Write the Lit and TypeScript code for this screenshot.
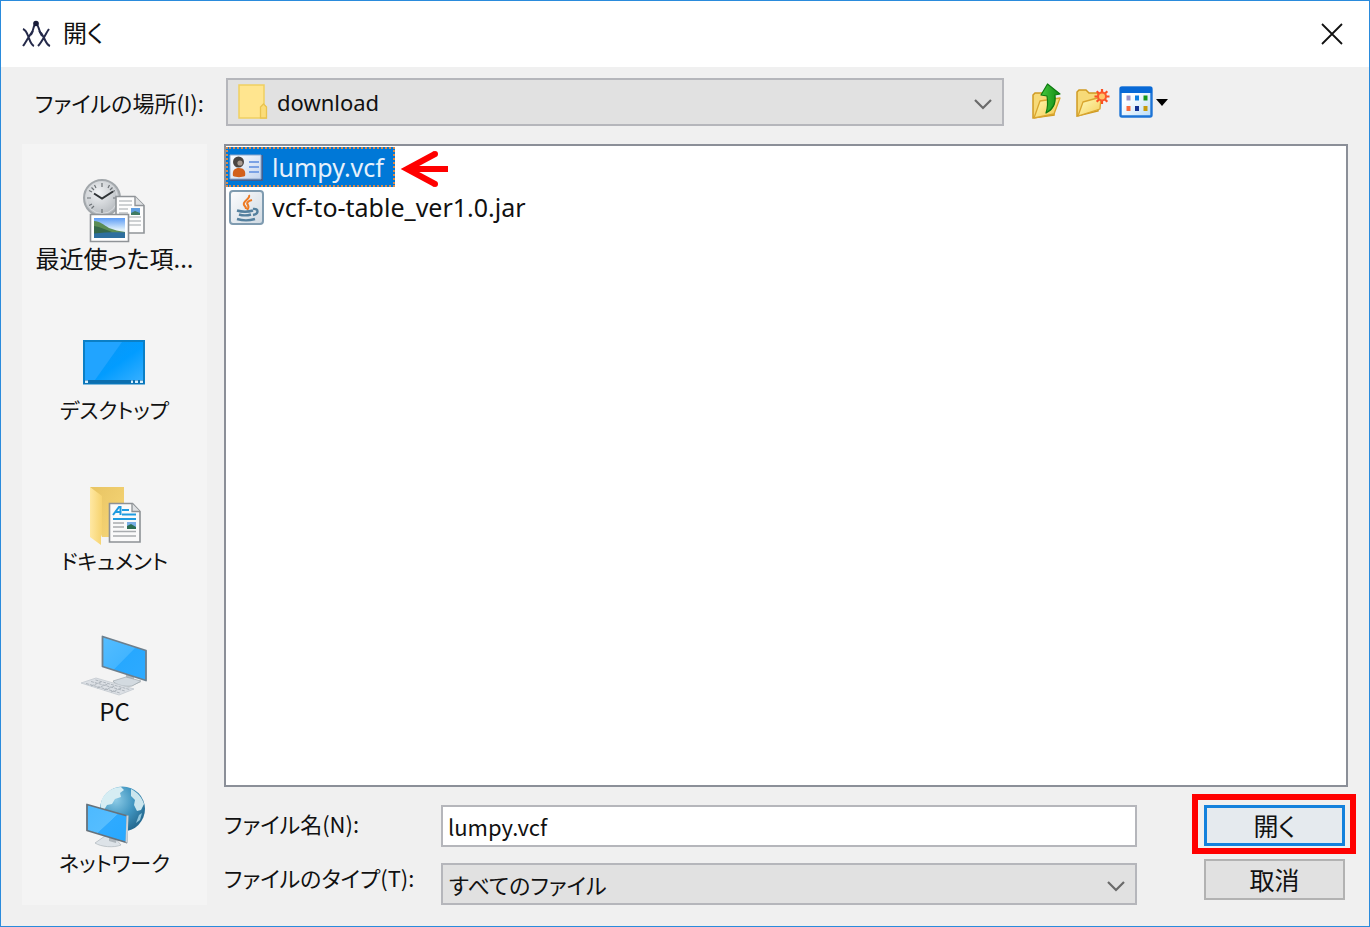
import { LitElement, html, svg, css, type TemplateResult } from "lit";
import { customElement, property, state } from "lit/decorators.js";
import { classMap } from "lit/directives/class-map.js";

const recentIcon = svg`
  <defs>
    <radialGradient id="dial" cx=".4" cy=".35" r=".8"><stop offset="0" stop-color="#f1f3f5"/><stop offset="1" stop-color="#a9aeb3"/></radialGradient>
    <linearGradient id="sky" x2="0" y2="1"><stop offset="0" stop-color="#5b9bf5"/><stop offset=".6" stop-color="#e3f3fb"/><stop offset=".75" stop-color="#cfe6f4"/></linearGradient>
  </defs>
  <circle cx="20" cy="20" r="18" fill="url(#dial)" stroke="#a2a7ab" stroke-width="2"/>
  <circle cx="20" cy="20" r="15.5" fill="none" stroke="#d9dcdf"/>
  <path d="M20 5v4M20 31v4M5 20h4M31 20h4M9.500 9.500l2.500 2.500M30.500 9.500 28 12M9.500 30.500 12 28M12.500 7l1.500 3M27.500 7 26 10M7 12.500l3 1.500M7 27.500l3-1.500M33 12.500 30 14" stroke="#6d7276" stroke-width="1.200"/>
  <path d="M12 15.500l8 5L31 13.500" fill="none" stroke="#2f3336" stroke-width="2"/>
  <path d="M34 18.500h19l9 9V55H34z" fill="#fdfdfd" stroke="#909498" stroke-width="1.600"/>
  <path d="M53 18.500v9h9" fill="#dfe1e3" stroke="#909498" stroke-width="1.400"/>
  <path d="M37 23h13M37 27h13M37 31h9M37 35h9M37 39h22M37 43h22M37 47h22" stroke="#bfc2c5" stroke-width="1.500"/>
  <path d="M49 30h9v7h-9z" fill="#5e9de0"/><path d="M49 35l4-2 5 2v2h-9z" fill="#3f7a62"/>
  <path d="M8.500 36.500h38v27h-38z" fill="#fff" stroke="#8f9397" stroke-width="1.600"/>
  <path d="M12 40h31v20H12z" fill="url(#sky)"/>
  <path d="M12 43c6 0 10 4 15 7 5 2 10 3 16 4v2H12z" fill="#5c8d55"/>
  <path d="M12 48c7 1 12 4 18 6l-6 3H12z" fill="#35684a"/>
  <path d="M12 55.500c10-1 20-1.500 31-1V60H12z" fill="#2e6f9f"/>`;

const desktopIcon = svg`
  <defs><linearGradient id="desk" x2="1" y2="1"><stop offset="0" stop-color="#0c95f3"/><stop offset=".55" stop-color="#029cff"/><stop offset="1" stop-color="#3cb1ff"/></linearGradient></defs>
  <path d="M2 12h60v42.500H2z" fill="url(#desk)" stroke="#0b7fc6" stroke-width="2"/>
  <path d="M3 13h37L13 51H3z" fill="#21a4ff"/>
  <path d="M2 51h60v3.500H2z" fill="#0b6eae"/>
  <path d="M3 51.500h3v2.500H3zM49 51.500h2v2.500h-2zM53 51.500h3v2.500h-3zM58 51.500h3v2.500h-3z" fill="#d7efff"/>`;

const documentsIcon = svg`
  <defs><linearGradient id="fold"><stop offset="0" stop-color="#ffe8a3"/><stop offset="1" stop-color="#f6d36f"/></linearGradient>
  <linearGradient id="back" x2="1" y2="1"><stop offset="0" stop-color="#e8c463"/><stop offset="1" stop-color="#f7d778"/></linearGradient></defs>
  <path d="M8 7h34v50H20z" fill="url(#back)"/>
  <path d="M8 7l12 9v38l-1 3v8L8 57z" fill="url(#fold)"/>
  <path d="M27.500 23.500h23l7.500 8V62H27.500z" fill="#fafafa" stroke="#8d9195" stroke-width="1.600"/>
  <path d="M50 23.500v8h8" fill="#dfe1e3" stroke="#8d9195" stroke-width="1.300"/>
  <path d="M31 35l6-8h1.500V35M33 32h6" stroke="#1e9be0" stroke-width="2" fill="none"/>
  <path d="M40 30h7M40 34.500h14M31 39h23" stroke="#1e9be0" stroke-width="2"/>
  <path d="M31 43h11M31 47h11M31 51.500h23M31 56h23" stroke="#a9acaf" stroke-width="1.500"/>
  <path d="M45 42h9v7h-9z" fill="#79aee6"/><path d="M45 46l4-2 5 3v2h-9z" fill="#2b6d53"/>`;

const pcIcon = svg`
  <defs><linearGradient id="lcd" x2="1" y2="1"><stop offset="0" stop-color="#55bdff"/><stop offset=".5" stop-color="#43b5ff"/><stop offset=".51" stop-color="#27a8ff"/><stop offset="1" stop-color="#2eaaff"/></linearGradient></defs>
  <path d="M43 40l8 3v6l7 2-9 4c-8 1-16-1-19-4l13-4z" fill="#b3babf"/>
  <path d="M30 50l13-4 15 4-9 5c-8 1-16-1-19-5z" fill="#d3dae0" stroke="#9fa7ae" stroke-width=".700"/>
  <path d="M19.500 5.500 63 19.500v30L19.500 35.500z" fill="url(#lcd)" stroke="#6d7f8d" stroke-width="1.800" stroke-linejoin="round"/>
  <path d="M-2 52l15-5 38 11-15 6z" fill="#dce0e5" stroke="#c3c9cf" stroke-width=".800"/>
  <path d="M3 52.500l34 9.500M8 50.500l34 9.500M12.500 49l34 9.500M8 55l10-4M14 57l11-4M21 59l11-4M28 61l11-4" stroke="#aeb5bc" stroke-width="1" stroke-dasharray="3 1"/>`;

const networkIcon = svg`
  <defs><radialGradient id="globe" cx=".35" cy=".3" r=".8"><stop offset="0" stop-color="#8ccbe6"/><stop offset=".5" stop-color="#4196c1"/><stop offset="1" stop-color="#1f6187"/></radialGradient>
  <linearGradient id="lcd2" x2="1" y2="1"><stop offset="0" stop-color="#4cb9ff"/><stop offset=".5" stop-color="#55bdff"/><stop offset=".51" stop-color="#2eaaff"/><stop offset="1" stop-color="#27a8ff"/></linearGradient></defs>
  <circle cx="39.500" cy="27" r="22.500" fill="url(#globe)"/>
  <path d="M19 17c4-8 12-12 19-12l3 3-4 3 1 4-6 2-3 5-5 1-3 5-3-1c-1-3 0-7 1-10z" fill="#d6edf3"/>
  <path d="M48 7c6 3 11 8 13 15l-3 6-4 1-3-6 1-5-4-4z" fill="#cbe6ee"/>
  <path d="M56 33l3-2-2 7-4 3z" fill="#92c6dc"/>
  <path d="M22 54l10 2 6 7c-7 3-20 2-26-2z" fill="#dde3e8" stroke="#b5bcc2" stroke-width=".800"/>
  <path d="M26 53l8 2-1 6-7-2z" fill="#aeb6bc"/>
  <path d="M4 22.500 44.500 34l-1 26.500L4 48.500z" fill="url(#lcd2)" stroke="#66727c" stroke-width="1.800" stroke-linejoin="round"/>
  <path d="M44.500 33.500l-1 27" stroke="#cbd3d9" stroke-width="2"/>`;

const appIcon = svg`
  <g fill="none" stroke="#252a4a" stroke-width="2">
    <path d="M1 9c3 1 4 4 5.500 8S9 25 12 26M11 11C8 14 4 22 1 26"/>
    <path d="M17 11c3 2 4 5 5.500 8S25 25 28 26M27 9c-3 4-7 13-11 17"/>
    <path d="M14 3c-3 2-2 7-5 12M14 3c3 2 2 7 6 13"/>
  </g><circle cx="14" cy="3.500" r="2.800" fill="#171b38"/>`;

const folderIcon = svg`
  <path d="M1 1h25v20l2 2v11H1z" fill="#ffe58f" stroke="#f0cf62" stroke-width="1.500"/>
  <path d="M22.500 34V23l3-3 3 3v11z" fill="#fbdc78" stroke="#e9c350" stroke-width="1.300"/>`;

const upIcon = svg`
  <defs><linearGradient id="yel" x2="1" y2="1"><stop offset="0" stop-color="#fffbb5"/><stop offset="1" stop-color="#f3c64c"/></linearGradient>
  <linearGradient id="grn"><stop offset="0" stop-color="#45c83e"/><stop offset="1" stop-color="#128a12"/></linearGradient></defs>
  <path d="M2 34V11l2-2h8l2 2h9v20z" fill="#f7da78" stroke="#cf9a22" stroke-width="1.500"/>
  <path d="M3 34l6-17 20-3-6 16z" fill="url(#yel)" stroke="#d9a52f" stroke-width="1.300" stroke-linejoin="round"/>
  <path d="M16.500 0 29 10l-5 1c1 8-1 14-9 18 2-6 2-11 1-17l-6-1z" fill="url(#grn)" stroke="#0d7a10" stroke-width="1.200" stroke-linejoin="round"/>`;

const newFolderIcon = svg`
  <defs><linearGradient id="yel2" x2="1" y2="1"><stop offset="0" stop-color="#fffcc0"/><stop offset="1" stop-color="#f5cf5c"/></linearGradient></defs>
  <path d="M2 32V8l2-2h7l3 3h9v18z" fill="#f7da78" stroke="#cf9a22" stroke-width="1.500"/>
  <path d="M3 32l5-14 18-5-1 12z" fill="url(#yel2)" stroke="#d9a52f" stroke-width="1.300" stroke-linejoin="round"/>
  <path d="M27 5v15M19.500 12.500h15M21.700 7.200l10.600 10.600M32.300 7.200 21.700 17.800" stroke="#fb4f23" stroke-width="2.200"/>
  <circle cx="27" cy="12.500" r="4" fill="#ffc56a" stroke="#fb5a2c" stroke-width="2"/>`;

const viewIcon = svg`
  <defs><linearGradient id="pane" x2="1" y2="1"><stop offset="0.300" stop-color="#fff"/><stop offset="1" stop-color="#b9dcf8"/></linearGradient></defs>
  <rect x="1.500" y="3.500" width="31" height="29" rx="1.500" fill="url(#pane)" stroke="#1d74d6" stroke-width="2.400"/>
  <path d="M1 3h32v6H1z" fill="#0869d6"/>
  <path d="M7.500 11.500h4v5h-4z" fill="#9d93c9"/><path d="M16 11.500h4v5h-4z" fill="#0e7fe0"/><path d="M24.500 11.500h4v5h-4z" fill="#14961b"/>
  <path d="M7.500 22h4v5h-4z" fill="#fa6a3c"/><path d="M16 22h4v5h-4z" fill="#123191"/><path d="M24.500 22h4v5h-4z" fill="#c79a0c"/>`;

const cardIcon = svg`
  <defs><linearGradient id="card" x2="1" y2="1"><stop offset="0" stop-color="#fff"/><stop offset="1" stop-color="#c4d5ee"/></linearGradient></defs>
  <path d="M1 5h33v26H1z" fill="#3e5f92"/>
  <path d="M1 5h31v24H1z" fill="url(#card)" stroke="#8ea7cb"/>
  <path d="M20 12h10M20 17h10M20 22h10" stroke="#7ba2e4" stroke-width="1.800"/>
  <path d="M4 26c-1-6 2-8 6-8 5 0 7 3 6 8-3 1.500-9 1.500-12 0z" fill="#d2601b"/>
  <circle cx="9.500" cy="12" r="5.500" fill="#4b4542"/><circle cx="11" cy="13" r="2.600" fill="#a89a90"/>`;

const jarIcon = svg`
  <defs><linearGradient id="jar" x2="1" y2="1"><stop offset="0" stop-color="#fdfdfe"/><stop offset="1" stop-color="#cfd9e2"/></linearGradient></defs>
  <rect x="1" y="1" width="33" height="33" rx="3" fill="url(#jar)" stroke="#7f9bb0" stroke-width="2"/>
  <path d="M20 5c2 4-7 6-5 10 1 1 2 2 2 4M23 10c-4 1-6 3-4 5 1 2 1 3-1 5" fill="none" stroke="#ee7a22" stroke-width="2"/>
  <path d="M8 20.500c5 1.500 11 1.500 16 0M10 24.500c4 1.200 8 1.200 12 0M24 19c6-1 6 5 0 6M8 29c5 1.500 13 1.500 18 0" fill="none" stroke="#54809e" stroke-width="2.400"/>`;

const chevron = html`<svg class="chevron" width="20" height="12" viewBox="0 0 20 12" aria-hidden="true"><path d="M2 2l8 8 8-8" fill="none" stroke="#6a6a6a" stroke-width="2.200"/></svg>`;

interface Place { label: string; icon: TemplateResult; kana: boolean }
interface Entry { name: string; icon: TemplateResult }

const places: Place[] = [
  { label: "最近使った項...", icon: recentIcon, kana: false },
  { label: "デスクトップ", icon: desktopIcon, kana: true },
  { label: "ドキュメント", icon: documentsIcon, kana: true },
  { label: "PC", icon: pcIcon, kana: false },
  { label: "ネットワーク", icon: networkIcon, kana: true },
];

const entries: Entry[] = [
  { name: "lumpy.vcf", icon: cardIcon },
  { name: "vcf-to-table_ver1.0.jar", icon: jarIcon },
];

const controls = css`
  *, *::before, *::after { box-sizing: border-box; }
  button, input, select {
    font: inherit;
    font-feature-settings: inherit;
    color: inherit;
    margin: 0;
    padding: 0;
    border: 0;
    border-radius: 0;
    background: none;
    appearance: none;
    outline: 0;
  }
  svg { display: block; overflow: visible; flex: none; }
`;

@customElement("places-bar")
class PlacesBar extends LitElement {
  static styles = [controls, css`
    :host { display: block; background: #f4f4f4; }
    .places { display: flex; flex-direction: column; align-items: center; gap: 58px; padding: 34px 0 27px; }
    .place { display: flex; flex-direction: column; align-items: center; gap: 3px; font-size: 24px; line-height: 26px; white-space: nowrap; }
    .kana { font-size: 21px; }
  `];
  render() {
    return html`<nav class="places">
      ${places.map((p) => html`<button class=${classMap({ place: true, kana: p.kana })} type="button">
        <svg width="64" height="64" viewBox="0 0 64 64" aria-hidden="true">${p.icon}</svg>
        <span>${p.label}</span>
      </button>`)}
    </nav>`;
  }
}

@customElement("file-list")
class FileList extends LitElement {
  @property() selected = "";
  static styles = [controls, css`
    :host { display: block; background: #fff; border: 2px solid #8b8f98; font-family: "Noto Sans", "Noto Sans CJK JP", sans-serif; }
    .list { list-style: none; margin: 0; padding: 1px 0; }
    .row { display: flex; align-items: center; gap: 7px; }
    .entry { display: flex; align-items: center; gap: 8px; height: 40px; padding: 0 9px 0 1px; border: 2px dotted transparent; font-size: 25px; line-height: 32px; }
    .current { background: #0078d7; color: #e6f1fb; border-color: #d98a4a; }
  `];
  private pick(name: string) {
    this.dispatchEvent(new CustomEvent("pick", { detail: name }));
  }
  render() {
    return html`<ul class="list">
      ${entries.map((e) => {
        const on = e.name === this.selected;
        return html`<li class="row">
          <button type="button" class=${classMap({ entry: true, current: on })} @click=${() => this.pick(e.name)}>
            <svg width="35" height="35" viewBox="0 0 35 35" aria-hidden="true">${e.icon}</svg>
            <span>${e.name}</span>
          </button>
          ${on ? html`<svg width="46" height="36" viewBox="0 0 46 36" aria-hidden="true">
            <path d="M4 20h42M33 5 5 20l28 15" fill="none" stroke="#f00" stroke-width="6"/><circle cx="33" cy="5" r="3" fill="#f00"/><circle cx="33" cy="35" r="3" fill="#f00"/>
          </svg>` : ""}
        </li>`;
      })}
    </ul>`;
  }
}

@customElement("app-root")
class AppRoot extends LitElement {
  @state() private file = "lumpy.vcf";

  static styles = [controls, css`
    :host { display: block; font-family: "Noto Sans CJK JP", sans-serif; font-size: 22px; line-height: 32px; color: #111; font-feature-settings: "palt"; }
    .dialog { display: flex; flex-direction: column; min-height: 100vh; background: #f0f0f0; border: 1px solid #2a8bdc; }
    .titlebar { display: flex; align-items: center; gap: 13px; height: 66px; padding: 0 26px 0 21px; background: #fff; }
    .title { flex: 1; margin: 0; padding-bottom: 4px; font-size: 24px; font-weight: 400; line-height: 32px; }
    .location { display: grid; grid-template-columns: 177px minmax(0, 1fr) auto; column-gap: 14px; align-items: center; padding: 11px 201px 18px 34px; }
    .location label { white-space: nowrap; }
    .tools { display: flex; align-items: center; gap: 8px; padding-left: 13px; }
    .tool { display: flex; align-items: center; gap: 3px; }
    .combo { position: relative; }
    .combo select { display: block; width: 100%; height: 42px; padding: 0 44px 0 6px; background: #e1e1e1; border: 2px solid #b5b6bb; }
    .combo .place-select { height: 48px; padding-left: 49px; font-family: "Noto Sans", sans-serif; }
    .chevron { position: absolute; right: 11px; top: 50%; margin-top: -4px; pointer-events: none; }
    .folder { position: absolute; left: 12px; top: 6px; pointer-events: none; }
    .main { flex: 1; display: grid; grid-template-columns: 185px minmax(0, 1fr); column-gap: 17px; padding: 0 21px 21px; }
    .content { display: flex; flex-direction: column; gap: 18px; }
    .files { flex: 1; }
    .form { display: grid; grid-template-columns: 203px minmax(0, 1fr) 141px; column-gap: 14px; padding-right: 3px; align-items: start; }
    .labels { display: flex; flex-direction: column; gap: 18px; line-height: 36px; white-space: nowrap; }
    .fields { display: flex; flex-direction: column; gap: 16px; padding-right: 53px; }
    .name { width: 100%; height: 42px; padding: 0 5px; background: #fff; border: 2px solid #b5b6bb; }
    .actions { display: flex; flex-direction: column; gap: 13px; }
    .action { position: relative; height: 41px; padding-bottom: 2px; background: #e1e1e1; border: 2px solid #b2b2b2; font-size: 25px; line-height: 32px; }
    .primary { background: #e5eaee; border: 3px solid #1481dc; }
    .primary::after { content: ""; position: absolute; inset: -14px -14px -11px -15px; border: 6px solid #f00; pointer-events: none; }
  `];

  render() {
    return html`<section class="dialog" role="dialog" aria-labelledby="title">
      <header class="titlebar">
        <svg width="28" height="28" viewBox="0 0 28 28" aria-hidden="true">${appIcon}</svg>
        <h1 class="title" id="title">開く</h1>
        <button type="button" aria-label="閉じる">
          <svg width="22" height="22" viewBox="0 0 22 22" aria-hidden="true"><path d="M1 1l20 20M21 1 1 21" stroke="#111" stroke-width="1.800"/></svg>
        </button>
      </header>
      <div class="location">
        <label for="where">ファイルの場所(I):</label>
        <div class="combo">
          <select class="place-select" id="where"><option>download</option></select>
          <svg class="folder" width="29" height="35" viewBox="0 0 29 35" aria-hidden="true">${folderIcon}</svg>
          ${chevron}
        </div>
        <div class="tools">
          <button class="tool" type="button" aria-label="上へ"><svg width="36" height="36" viewBox="0 0 36 36" aria-hidden="true">${upIcon}</svg></button>
          <button class="tool" type="button" aria-label="新しいフォルダー"><svg width="36" height="36" viewBox="0 0 36 36" aria-hidden="true">${newFolderIcon}</svg></button>
          <button class="tool" type="button" aria-label="表示">
            <svg width="34" height="36" viewBox="0 0 34 36" aria-hidden="true">${viewIcon}</svg>
            <svg width="12" height="7" viewBox="0 0 12 7" aria-hidden="true"><path d="M0 0h12L6 7z" fill="#000"/></svg>
          </button>
        </div>
      </div>
      <div class="main">
        <places-bar></places-bar>
        <div class="content">
          <file-list class="files" .selected=${this.file} @pick=${(e: CustomEvent<string>) => { this.file = e.detail; }}></file-list>
          <form class="form" @submit=${(e: Event) => e.preventDefault()}>
            <div class="labels">
              <label for="name">ファイル名(N):</label>
              <label for="type">ファイルのタイプ(T):</label>
            </div>
            <div class="fields">
              <input class="name" id="name" type="text" .value=${this.file}>
              <div class="combo">
                <select id="type"><option>すべてのファイル</option></select>
                ${chevron}
              </div>
            </div>
            <div class="actions">
              <button class="action primary" type="submit">開く</button>
              <button class="action" type="button">取消</button>
            </div>
          </form>
        </div>
      </div>
    </section>`;
  }
}
